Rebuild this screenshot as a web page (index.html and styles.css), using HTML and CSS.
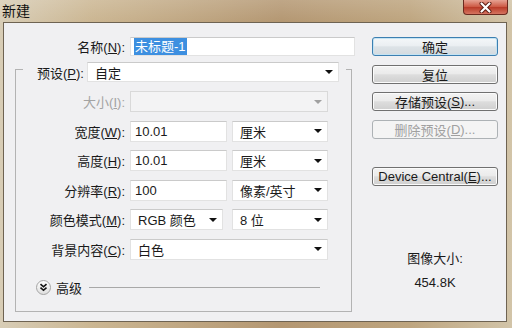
FILE: index.html
```html
<!DOCTYPE html>
<html lang="zh-CN">
<head>
  <meta charset="UTF-8">
  <title>新建</title>
  <link rel="stylesheet" href="styles.css">
</head>
<body>
  <div class="window">
    <div class="titlebar">
      <span class="title">新建</span>
      <span class="close">
        <svg width="13" height="11" viewBox="0 0 13 11">
          <path d="M2.5 1.5 L10.5 9.5 M10.5 1.5 L2.5 9.5" stroke="#5a1a10" stroke-width="4" stroke-linecap="round"/>
          <path d="M2.5 1.5 L10.5 9.5 M10.5 1.5 L2.5 9.5" stroke="#fff" stroke-width="2.2" stroke-linecap="round"/>
        </svg>
      </span>
    </div>

    <div class="client">
      <div class="form">
        <div class="row name-row">
          <span class="label">名称(<u>N</u>):</span>
          <div class="field name-field"><span class="selected">未标题-1</span></div>
        </div>

        <fieldset class="group">
          <legend class="preset">
            <div class="preset-inner">
              <span class="preset-label">预设(<u>P</u>):</span>
              <div class="field select preset-select"><span>自定</span><i class="arrow"></i></div>
            </div>
          </legend>

          <div class="rows">
            <div class="row disabled">
              <span class="label">大小(<u>I</u>):</span>
              <div class="field select wide"><span></span><i class="arrow"></i></div>
            </div>
            <div class="row">
              <span class="label">宽度(<u>W</u>):</span>
              <div class="field num">10.01</div>
              <div class="field select unit"><span>厘米</span><i class="arrow"></i></div>
            </div>
            <div class="row">
              <span class="label">高度(<u>H</u>):</span>
              <div class="field num">10.01</div>
              <div class="field select unit"><span>厘米</span><i class="arrow"></i></div>
            </div>
            <div class="row">
              <span class="label">分辨率(<u>R</u>):</span>
              <div class="field num">100</div>
              <div class="field select unit"><span>像素/英寸</span><i class="arrow"></i></div>
            </div>
            <div class="row">
              <span class="label">颜色模式(<u>M</u>):</span>
              <div class="field select mode"><span>RGB 颜色</span><i class="arrow"></i></div>
              <div class="field select unit"><span>8 位</span><i class="arrow"></i></div>
            </div>
            <div class="row">
              <span class="label">背景内容(<u>C</u>):</span>
              <div class="field select wide"><span>白色</span><i class="arrow"></i></div>
            </div>
          </div>

          <div class="advanced">
            <svg class="adv-icon" width="15" height="15" viewBox="0 0 15 15">
              <defs>
                <linearGradient id="advbg" x1="0" y1="0" x2="0" y2="1">
                  <stop offset="0" stop-color="#ffffff"/>
                  <stop offset="1" stop-color="#dedede"/>
                </linearGradient>
              </defs>
              <circle cx="7.5" cy="7.5" r="7" fill="url(#advbg)" stroke="#a4a4a4"/>
              <path d="M4.5 4.2 L7.5 6.8 L10.5 4.2 M4.5 7.7 L7.5 10.3 L10.5 7.7" fill="none" stroke="#111" stroke-width="1.6"/>
            </svg>
            <span>高级</span>
            <span class="adv-line"></span>
          </div>
        </fieldset>
      </div>

      <div class="actions">
        <div class="btn btn-default">确定</div>
        <div class="btn">复位</div>
        <div class="btn">存储预设(<u>S</u>)...</div>
        <div class="btn btn-disabled">删除预设(<u>D</u>)...</div>
        <div class="btn device">Device Central(<u>E</u>)...</div>
        <div class="info">
          <div>图像大小:</div>
          <div>454.8K</div>
        </div>
      </div>
    </div>
  </div>
</body>
</html>
```

FILE: styles.css
```css
body {
  margin: 0;
  font-family: "Liberation Sans", "Noto Sans CJK SC", sans-serif;
  font-size: 13px;
  color: #1a1a1a;
}
.window {
  width: 512px;
  height: 328px;
  display: flex;
  flex-direction: column;
  background:
    linear-gradient(rgba(255, 255, 255, 0.15), rgba(255, 255, 255, 0) 22px),
    linear-gradient(90deg, #d8cdb6 0%, #cbb692 18%, #b49772 55%, #bea57f 80%, #d2c4a8 100%);
}
.titlebar {
  height: 22px;
  flex: none;
  display: flex;
  justify-content: space-between;
  align-items: flex-start;
}
.title {
  padding: 3px 0 0 2px;
  font-size: 14px;
  line-height: 16px;
  color: #111;
}
.close {
  width: 45px;
  height: 15px;
  margin-right: 4px;
  box-sizing: border-box;
  border: 1px solid #6b2a1f;
  border-top: none;
  border-radius: 0 0 4px 4px;
  background: linear-gradient(#e6a292, #cd5a45 48%, #b93b28 52%, #d57460);
  display: flex;
  justify-content: center;
  align-items: center;
}
.client {
  flex: 1;
  margin: 0 5px 6px 3px;
  border: 1px solid #6e6352;
  background: #f0f0f2;
  display: flex;
}
.form {
  width: 368px;
  flex: none;
  box-sizing: border-box;
  padding: 14px 0 0 11px;
}
.row {
  display: flex;
  align-items: center;
  gap: 5px;
  height: 21px;
}
.label {
  flex: none;
  width: 110px;
  text-align: right;
  white-space: nowrap;
}
.field {
  flex: none;
  height: 100%;
  box-sizing: border-box;
  background: #fff;
  border: 1px solid #e2e2e2;
  border-top-color: #cacaca;
  display: flex;
  align-items: center;
  padding: 0 4px;
  white-space: nowrap;
}
.name-row {
  height: 19px;
}
.name-field {
  width: 225px;
  padding-left: 3px;
}
.selected {
  background: #3d8fe0;
  color: #fff;
  line-height: 17px;
  padding: 0 1px;
}
.group {
  width: 337px;
  box-sizing: border-box;
  min-width: 0;
  margin: 0;
  padding: 0 0 16px;
  border: 1px solid #b3b3b3;
}
.preset {
  margin-left: 7px;
  padding: 6px 7px 0 14px;
}
.preset-inner {
  display: flex;
  align-items: center;
  height: 20px;
}
.preset-label {
  width: 50px;
}
.preset-select {
  width: 252px;
  padding-left: 5px;
}
.select {
  justify-content: space-between;
  padding: 0 5px 0 7px;
}
.arrow {
  width: 0;
  height: 0;
  border-left: 4px solid transparent;
  border-right: 4px solid transparent;
  border-top: 4px solid #111;
}
.rows {
  margin-top: 9px;
  display: flex;
  flex-direction: column;
  gap: 8.5px;
}
.rows .label {
  width: 109px;
}
.wide {
  width: 198px;
}
.num {
  width: 97px;
}
.unit {
  width: 96px;
}
.mode {
  width: 93px;
  margin-right: 4px;
}
.disabled .label {
  color: #a3a3a3;
}
.disabled .field {
  background: #f3f3f4;
  border-color: #d9d9d9;
}
.disabled .arrow {
  border-top-color: #a0a0a0;
}
.advanced {
  display: flex;
  align-items: center;
  gap: 5px;
  height: 15px;
  margin-top: 20px;
  padding: 0 31px 0 20px;
}
.adv-line {
  flex: 1;
  height: 1px;
  margin-left: 2px;
  background: #a8a8a8;
}
.actions {
  width: 126px;
  flex: none;
  padding-top: 14px;
  display: flex;
  flex-direction: column;
  gap: 8.5px;
}
.btn {
  height: 19px;
  box-sizing: border-box;
  border: 1px solid #707070;
  border-radius: 3px;
  background: linear-gradient(#f3f3f3, #ebebeb 45%, #dddddd 52%, #cfcfcf);
  box-shadow: inset 0 0 0 1px #fbfbfb;
  display: flex;
  align-items: center;
  justify-content: center;
  white-space: nowrap;
}
.btn-default {
  border-color: #3c7fb1;
  background: linear-gradient(#f4f7f9, #ebeff2 45%, #dde3e7 52%, #d3dadf);
  box-shadow: inset 0 0 0 1px #c4e3f3;
}
.btn-disabled {
  border-color: #adb2b5;
  background: #f4f4f4;
  box-shadow: none;
  color: #a0a0a0;
}
.device {
  margin-top: 19.5px;
}
.info {
  margin-top: 53px;
  text-align: center;
  line-height: 24px;
}
```
